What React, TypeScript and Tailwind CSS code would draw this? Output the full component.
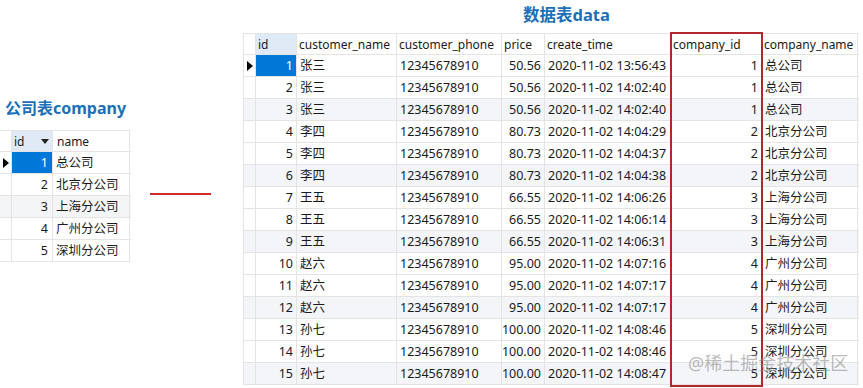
import React from 'react';

type Row = [number, string, string, string, string, number, string];

const rows: Row[] = [
  [1, '张三', '12345678910', '50.56', '2020-11-02 13:56:43', 1, '总公司'],
  [2, '张三', '12345678910', '50.56', '2020-11-02 14:02:40', 1, '总公司'],
  [3, '张三', '12345678910', '50.56', '2020-11-02 14:02:40', 1, '总公司'],
  [4, '李四', '12345678910', '80.73', '2020-11-02 14:04:29', 2, '北京分公司'],
  [5, '李四', '12345678910', '80.73', '2020-11-02 14:04:37', 2, '北京分公司'],
  [6, '李四', '12345678910', '80.73', '2020-11-02 14:04:38', 2, '北京分公司'],
  [7, '王五', '12345678910', '66.55', '2020-11-02 14:06:26', 3, '上海分公司'],
  [8, '王五', '12345678910', '66.55', '2020-11-02 14:06:14', 3, '上海分公司'],
  [9, '王五', '12345678910', '66.55', '2020-11-02 14:06:31', 3, '上海分公司'],
  [10, '赵六', '12345678910', '95.00', '2020-11-02 14:07:16', 4, '广州分公司'],
  [11, '赵六', '12345678910', '95.00', '2020-11-02 14:07:17', 4, '广州分公司'],
  [12, '赵六', '12345678910', '95.00', '2020-11-02 14:07:17', 4, '广州分公司'],
  [13, '孙七', '12345678910', '100.00', '2020-11-02 14:08:46', 5, '深圳分公司'],
  [14, '孙七', '12345678910', '100.00', '2020-11-02 14:08:46', 5, '深圳分公司'],
  [15, '孙七', '12345678910', '100.00', '2020-11-02 14:08:47', 5, '深圳分公司'],
];

const companies: [number, string][] = [
  [1, '总公司'],
  [2, '北京分公司'],
  [3, '上海分公司'],
  [4, '广州分公司'],
  [5, '深圳分公司'],
];

const Pointer = () => (
  <svg width="6" height="10" viewBox="0 0 6 10">
    <polygon points="0,0 6,5 0,10" fill="#000" />
  </svg>
);

const SortArrow = () => (
  <svg width="8" height="5" viewBox="0 0 8 5">
    <polygon points="0,0 8,0 4,5" fill="#222" />
  </svg>
);

const cell = 'h-full border-r border-[#e4e4e4] flex items-center overflow-hidden whitespace-nowrap';

function CompanyTable() {
  return (
    <div>
      <div className="flex h-[22px] border-t border-b border-[#e4e4e4] text-[12px]">
        <div className={`${cell} w-[12px] bg-white`} />
        <div className={`${cell} w-[41px] bg-[#dfeaf6] pl-[2px] justify-between pr-[3px]`}>
          <span>id</span>
          <SortArrow />
        </div>
        <div className={`${cell} w-[77px] pl-[4px]`}>name</div>
      </div>
      {companies.map(([id, name], i) => (
        <div
          key={id}
          className={`flex h-[22px] border-b border-[#e4e4e4] ${i === 2 ? 'bg-[#f4f5f7]' : 'bg-white'}`}
        >
          <div className={`${cell} w-[12px] justify-center`}>{i === 0 && <Pointer />}</div>
          <div
            className={`${cell} w-[41px] justify-end pr-[4px] ${i === 0 ? 'bg-[#0078d7] text-white' : ''}`}
          >
            {id}
          </div>
          <div className={`${cell} w-[77px] pl-[3px]`}>{name}</div>
        </div>
      ))}
    </div>
  );
}

function DataTable() {
  const head = ['id', 'customer_name', 'customer_phone', 'price', 'create_time', 'company_id', 'company_name'];
  const widths = ['w-[41px]', 'w-[100px]', 'w-[105px]', 'w-[43px]', 'w-[126px]', 'w-[91px]', 'w-[96px]'];
  const right = [true, false, false, true, false, true, false];

  return (
    <div className="relative">
      <div className="flex h-[22px] border-t border-b border-[#e4e4e4] text-[12px]">
        <div className={`${cell} w-[13px] border-l`} />
        {head.map((h, i) => (
          <div key={h} className={`${cell} ${widths[i]} pl-[2px] ${i === 0 ? 'bg-[#dfeaf6]' : 'bg-white'}`}>
            {h}
          </div>
        ))}
      </div>
      {rows.map((r, ri) => (
        <div
          key={r[0]}
          className={`flex h-[22px] border-b border-[#e4e4e4] ${ri % 3 === 2 ? 'bg-[#f3f5f8]' : 'bg-white'}`}
        >
          <div className={`${cell} w-[13px] border-l justify-center`}>{ri === 0 && <Pointer />}</div>
          {r.map((v, ci) => (
            <div
              key={ci}
              className={`${cell} ${widths[ci]} ${right[ci] ? 'justify-end pr-[3px]' : 'pl-[3px]'} ${
                ri === 0 && ci === 0 ? 'bg-[#0078d7] text-white' : ''
              }`}
            >
              {v}
            </div>
          ))}
        </div>
      ))}
      {/* highlight box around company_id */}
      <div className="absolute left-[427px] top-[-1px] bottom-[-2px] w-[93px] border-2 border-[#b3262b] pointer-events-none" />
    </div>
  );
}

export default function App() {
  return (
    <div className="relative w-[863px] h-[388px] bg-white overflow-hidden flex text-[12.5px] leading-[21px] text-[#1a1a1a] font-['Noto_Sans','Noto_Sans_CJK_SC',sans-serif]">
      <div className="w-[243px] shrink-0 flex">
        <div className="w-[131px] pt-[97px]">
          <div className="pl-[5px] h-[22px] leading-[22px] text-[16px] font-bold text-[#1b6fb8]">公司表company</div>
          <div className="mt-[11px]">
            <CompanyTable />
          </div>
        </div>
        <div className="ml-[19px] mt-[193px] w-[61px] h-[2px] bg-[#d22b2b]" />
      </div>

      <div className="w-[616px] shrink-0">
        <div className="h-[33px] pt-[4px] pl-[280px] leading-[22px] text-[16.5px] font-bold text-[#1b6fb8]">数据表data</div>
        <DataTable />
      </div>

      <div className="absolute left-[688px] top-[352px] text-[18px] leading-[22px] text-[#8c8c8c]/60 pointer-events-none">
        @稀土掘金技术社区
      </div>
    </div>
  );
}
